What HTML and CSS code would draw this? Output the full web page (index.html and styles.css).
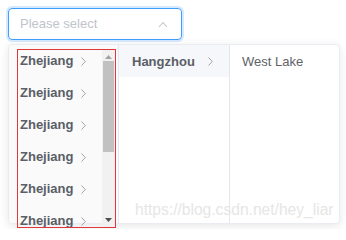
FILE: index.html
```html
<!DOCTYPE html>
<html>
<head>
<meta charset="utf-8">
<link rel="stylesheet" href="styles.css">
</head>
<body>
<div class="page">
  <div class="select">
    <span class="placeholder">Please select</span>
    <svg class="caret" width="10" height="7" viewBox="0 0 10 7"><path d="M1 6 L5 1.5 L9 6" fill="none" stroke="#c0c4cc" stroke-width="1.1"/></svg>
  </div>
  <div class="dropdown">
    <div class="panel panel-first">
      <div class="scrollbox">
        <ul class="list">
          <li class="item"><span class="label">Zhejiang</span><svg class="arrow" width="5" height="9" viewBox="0 0 5 9"><path d="M0.5 0.5 L4.3 4.5 L0.5 8.5" fill="none" stroke="#a0a3aa" stroke-width="1"/></svg></li>
          <li class="item"><span class="label">Zhejiang</span><svg class="arrow" width="5" height="9" viewBox="0 0 5 9"><path d="M0.5 0.5 L4.3 4.5 L0.5 8.5" fill="none" stroke="#a0a3aa" stroke-width="1"/></svg></li>
          <li class="item"><span class="label">Zhejiang</span><svg class="arrow" width="5" height="9" viewBox="0 0 5 9"><path d="M0.5 0.5 L4.3 4.5 L0.5 8.5" fill="none" stroke="#a0a3aa" stroke-width="1"/></svg></li>
          <li class="item"><span class="label">Zhejiang</span><svg class="arrow" width="5" height="9" viewBox="0 0 5 9"><path d="M0.5 0.5 L4.3 4.5 L0.5 8.5" fill="none" stroke="#a0a3aa" stroke-width="1"/></svg></li>
          <li class="item"><span class="label">Zhejiang</span><svg class="arrow" width="5" height="9" viewBox="0 0 5 9"><path d="M0.5 0.5 L4.3 4.5 L0.5 8.5" fill="none" stroke="#a0a3aa" stroke-width="1"/></svg></li>
          <li class="item"><span class="label">Zhejiang</span><svg class="arrow" width="5" height="9" viewBox="0 0 5 9"><path d="M0.5 0.5 L4.3 4.5 L0.5 8.5" fill="none" stroke="#a0a3aa" stroke-width="1"/></svg></li>
        </ul>
        <div class="scrollbar">
          <div class="sb-btn"><svg width="7" height="4" viewBox="0 0 7 4"><path d="M0 4 L3.5 0 L7 4 Z" fill="#a3a3a3"/></svg></div>
          <div class="sb-track"><div class="sb-thumb"></div></div>
          <div class="sb-btn sb-down"><svg width="7" height="4" viewBox="0 0 7 4"><path d="M0 0 L7 0 L3.5 4 Z" fill="#505050"/></svg></div>
        </div>
      </div>
    </div>
    <div class="panel panel-second">
      <div class="row active"><span class="label">Hangzhou</span><svg class="arrow" width="5" height="9" viewBox="0 0 5 9"><path d="M0.5 0.5 L4.3 4.5 L0.5 8.5" fill="none" stroke="#a0a3aa" stroke-width="1"/></svg></div>
    </div>
    <div class="panel panel-third">
      <div class="row leaf">West Lake</div>
    </div>
    <div class="watermark">https://blog.csdn.net/hey_liar</div>
  </div>
</div>
</body>
</html>
```
FILE: styles.css
```css
* { box-sizing: border-box; }
html, body { margin: 0; padding: 0; background: #ffffff; }
body { font-family: "Liberation Sans", Arial, sans-serif; font-size: 13px; color: #606266; }

.page { padding: 8px; width: 346px; height: 229px; overflow: hidden; position: relative; }

.select {
  width: 174px;
  height: 32px;
  border: 1px solid #409eff;
  border-radius: 4px;
  box-shadow: 0 0 0 2px rgba(64, 158, 255, 0.22);
  display: flex;
  align-items: center;
  justify-content: space-between;
  padding: 0 13px 0 11px;
}
.placeholder { color: #c0c4cc; font-size: 13px; line-height: 16px; }
.caret { display: block; }

.dropdown {
  margin-top: 4px;
  width: 332px;
  height: 180px;
  border: 1px solid #e9ecf1;
  border-radius: 4px;
  background: #ffffff;
  box-shadow: 0 2px 10px rgba(0, 0, 0, 0.1);
  display: flex;
  position: relative;
}

.panel { height: 100%; }
.panel-first {
  width: 110px;
  background: #fafafa;
  border-right: 1px solid #e4e7ed;
  padding: 4px 1px 0 8px;
  border-radius: 4px 0 0 4px;
}
.panel-second { width: 111px; border-right: 1px solid #e4e7ed; }
.panel-third { flex: 1; }

.scrollbox {
  width: 99px;
  height: 179px;
  border: 1px solid #e0383a;
  display: flex;
  overflow: hidden;
  position: relative;
  z-index: 2;
}
.list { list-style: none; margin: 0; padding: 0; flex: 1; overflow: hidden; }
.item {
  height: 32px;
  padding: 0 16px 10px 2px;
  line-height: 22px;
  display: flex;
  align-items: center;
  justify-content: space-between;
}
.label { font-weight: bold; color: #5b5e66; }
.arrow { display: block; }

.scrollbar { width: 13px; display: flex; flex-direction: column; background: #f1f1f1; }
.sb-btn { height: 11px; display: flex; align-items: center; justify-content: center; padding-top: 2px; }
.sb-down { padding-top: 0; padding-bottom: 4px; }
.sb-track { flex: 1; padding: 0 1px; }
.sb-thumb { height: 91px; background: #c1c1c1; }

.row {
  height: 32px;
  display: flex;
  align-items: center;
  justify-content: space-between;
  padding: 0 16px 0 13px;
}
.row.active { background: #f5f7fa; }
.row.leaf { padding-left: 12px; color: #606266; }

.watermark {
  position: absolute;
  left: 126px;
  top: 156px;
  font-family: "Liberation Sans", Arial, sans-serif;
  font-size: 15.6px;
  line-height: 18px;
  color: #e6e6e6;
  white-space: nowrap;
  z-index: 3;
}
```
